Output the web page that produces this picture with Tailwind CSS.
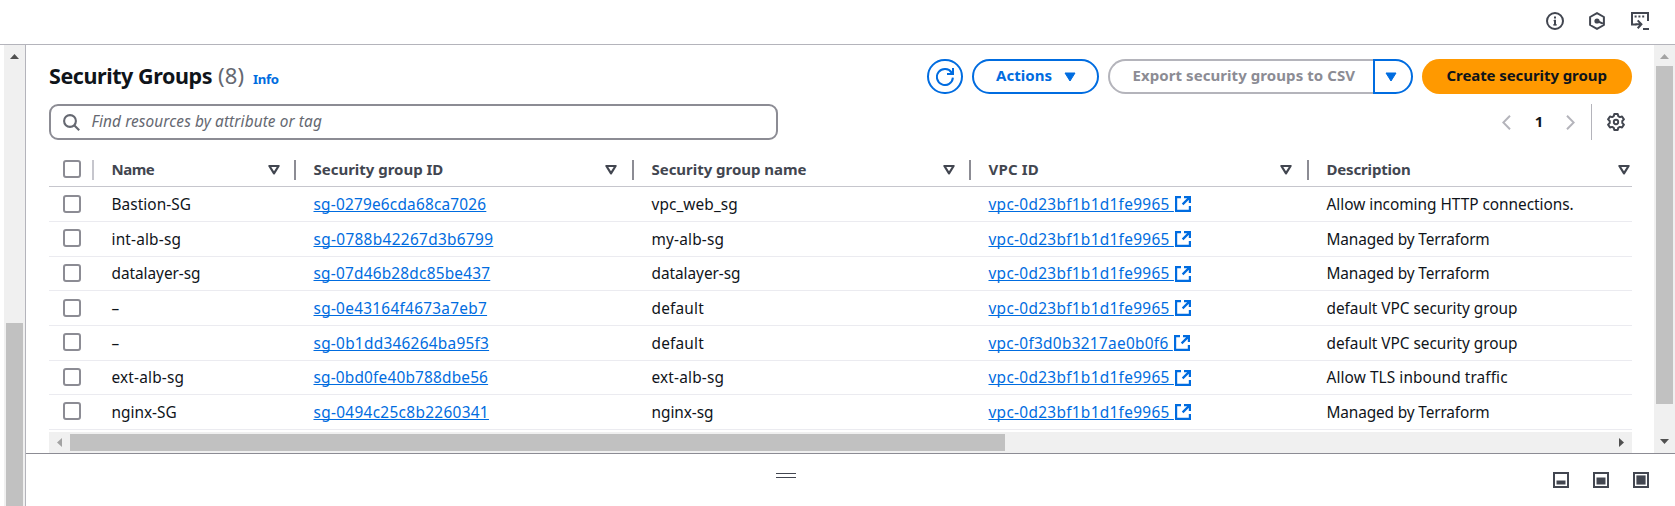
<!DOCTYPE html>
<html lang="en">
<head>
<meta charset="utf-8">
<title>Security Groups</title>
<script src="https://cdn.jsdelivr.net/npm/@tailwindcss/browser@4"></script>
</head>
<body class="w-[1675px] h-[506px] overflow-hidden bg-white font-['Noto_Sans','Open_Sans',sans-serif] text-[15.4px] text-[#0f141a] flex flex-col whitespace-nowrap">

<!-- Top bar -->
<header class="h-[45px] shrink-0 border-b border-[#b4b4bb] flex justify-end pt-3 pr-[26px] text-[#424650]">
  <svg class="w-[18px] h-[18px] mr-6" viewBox="0 0 18 18" fill="none" stroke="currentColor" stroke-width="2"><circle cx="9" cy="9" r="8"/><path d="M9 7.8V13.2M9 4.6V6.6"/><path d="M7.6 8.6H9M7.2 12.9H10.8" stroke-width="1.2"/></svg>
  <svg class="w-[18px] h-[18px] mr-[25px]" viewBox="0 0 18 18" fill="none" stroke="currentColor" stroke-width="2"><path d="M9 1.1L15.9 5V13L9 16.9L2.1 13V5Z" stroke-linejoin="round"/><circle cx="9" cy="9" r="2.6" fill="currentColor" stroke="none"/><path d="M9 9L15 11.6"/></svg>
  <svg class="w-[18px] h-[18px]" viewBox="0 0 18 18" fill="none" stroke="currentColor" stroke-width="2"><path d="M5.5 12.5H1V1H17V9"/><path d="M3.6 4.4H5.6M7.4 4.4H9.4M11.2 4.4H13.2"/><path d="M4.5 12.3H9.4M6.7 8.4L10.4 12.2L6.7 16.2M12 17H18"/></svg>
</header>

<div class="flex flex-1 min-h-0">
  <!-- Navigation scrollbar -->
  <div class="ml-1 w-[21px] bg-[#f0f0f0] flex flex-col items-center shrink-0">
    <svg class="w-[9px] h-[5px] mt-[9px] shrink-0" viewBox="0 0 9 5" fill="#505050"><path d="M4.5 0L9 5H0Z"/></svg>
    <div class="mt-[264px] w-[17px] flex-1 bg-[#c1c1c1]"></div>
  </div>

  <div class="flex-1 min-w-0 border-l border-[#b4b4bb] flex flex-col">
    <div class="h-[408px] flex shrink-0">
      <main class="w-[1606px] pl-[23px] flex flex-col">
        <!-- Title and actions -->
        <div class="h-[49px] pt-[14px] flex items-start">
          <h1 class="flex h-[35px] text-[21.5px] leading-[34px] font-bold tracking-[-0.43px] w-[169px]">Security Groups</h1>
          <span class="text-[22px] leading-[34px] -mt-[1px] text-[#656871] tracking-[0.2px] w-[35px]">(8)</span>
          <a class="text-[13.2px] leading-[34px] mt-[3px] font-bold text-[#006ce0] tracking-[-0.35px] flex-1">Info</a>
          <div class="flex h-[35px] leading-[28px] font-bold text-[15px]">
            <button class="w-9 h-[35px] border-2 border-[#006ce0] rounded-full text-[#006ce0] flex items-center justify-center mr-[9px]">
              <svg class="w-[18px] h-[18px]" viewBox="0 0 18 18" fill="none" stroke="currentColor" stroke-width="2"><path d="M16.9 9.6A8 8 0 1 1 15.6 4.6L17 6.2M17 0V6H11"/></svg>
            </button>
            <button class="w-[127px] border-2 border-[#006ce0] rounded-full text-[#006ce0] flex items-center pl-[22px] mr-[9px]"><span class="w-[68px] text-left tracking-[0.04px] -mt-[3px]">Actions</span><svg class="w-[12px] h-[10px]" viewBox="0 0 12 10" fill="currentColor" stroke="currentColor" stroke-linejoin="round"><path d="M1 1H11L6 9Z"/></svg></button>
            <button class="w-[265px] border-2 border-r-0 border-[#b4b4bb] rounded-l-full text-[#8c8c94] text-left pl-[22.5px] pb-[3px] tracking-[0.07px]">Export security groups to CSV</button>
            <button class="w-10 border-2 border-[#006ce0] rounded-r-full text-[#006ce0] flex items-center pl-[10px] mr-[9px]"><svg class="w-[12px] h-[10px]" viewBox="0 0 12 10" fill="currentColor" stroke="currentColor" stroke-linejoin="round"><path d="M1 1H11L6 9Z"/></svg></button>
            <button class="w-[210px] bg-[#ff9900] rounded-full text-left pl-[24.5px] pb-[3px] tracking-[-0.08px]">Create security group</button>
          </div>
        </div>

        <!-- Filter and pagination -->
        <div class="h-9 mt-[10px] flex">
          <div class="w-[729px] h-9 border-2 border-[#8c8c94] rounded-[9px] flex items-center text-[#656871]">
            <svg class="w-[17px] h-[17px] ml-3 mr-[11.5px]" viewBox="0 0 17 17" fill="none" stroke="currentColor" stroke-width="2.1"><circle cx="7" cy="7" r="5.9"/><path d="M11.2 11.2L16.2 16.2"/></svg>
            <span class="italic leading-[32px] text-[15.4px] tracking-[0.1px]">Find resources by attribute or tag</span>
          </div>
          <div class="flex-1"></div>
          <div class="flex items-center text-[#b4b4bb]">
            <svg class="w-[9px] h-[15px] mt-[1px]" viewBox="0 0 9 15" fill="none" stroke="currentColor" stroke-width="2"><path d="M8 0.8L1.3 7.5L8 14.2"/></svg>
            <span class="w-[55px] pl-px text-center font-bold text-[15px] leading-[34px] -mt-[2px] text-[#0f141a]">1</span>
            <svg class="w-[9px] h-[15px] mt-[1px]" viewBox="0 0 9 15" fill="none" stroke="currentColor" stroke-width="2"><path d="M1 0.8L7.7 7.5L1 14.2"/></svg>
          </div>
          <div class="w-px ml-4 bg-[#b4b4bb]"></div>
          <svg class="w-[18px] h-[18px] ml-[15px] mr-[7px] mt-[9px] text-[#424650]" viewBox="0 0 18 18" fill="none" stroke="currentColor" stroke-width="2" stroke-linejoin="round"><path d="M6.8 3.1L7.3 1H10.7L11.2 3.1L12.9 4.1L15 3.5L16.9 6.4L15.3 8V10L16.9 11.6L15 14.5L12.9 13.9L11.2 14.9L10.7 17H7.3L6.8 14.9L5.1 13.9L3 14.5L1.1 11.6L2.7 10V8L1.1 6.4L3 3.5L5.1 4.1Z"/><circle cx="9" cy="9" r="2.2" stroke-width="1.9"/></svg>
        </div>

        <!-- Table -->
        <div id="head" class="h-[47px] border-b border-[#c6c6cd] grid grid-cols-[45px_202px_338px_337px_338px_323px] pt-5 text-[15px] font-bold text-[#424650]"></div>
        <div id="rows"></div>

        <!-- Horizontal scrollbar -->
        <div class="mt-[2px] h-[21px] bg-[#f0f0f0] flex items-center">
          <svg class="w-[5px] h-[9px] ml-2 mr-2" viewBox="0 0 5 9" fill="#a3a3a3"><path d="M0 4.5L5 0V9Z"/></svg>
          <div class="w-[935px] h-[17px] bg-[#c1c1c1]"></div>
          <div class="flex-1"></div>
          <svg class="w-[5px] h-[9px] mr-2" viewBox="0 0 5 9" fill="#505050"><path d="M5 4.5L0 0V9Z"/></svg>
        </div>
      </main>
      <!-- Content scrollbar -->
      <div class="w-[21px] ml-[22px] bg-[#f0f0f0] flex flex-col items-center shrink-0">
        <svg class="w-[9px] h-[5px] mt-[9px]" viewBox="0 0 9 5" fill="#a3a3a3"><path d="M4.5 0L9 5H0Z"/></svg>
        <div class="mt-[7px] w-[17px] h-[338px] bg-[#c1c1c1]"></div>
        <svg class="w-[9px] h-[5px] mt-[35px]" viewBox="0 0 9 5" fill="#505050"><path d="M4.5 5L0 0H9Z"/></svg>
      </div>
    </div>

    <!-- Split panel -->
    <footer class="flex-1 border-t border-[#8c8c94] flex text-[#424650]">
      <div class="ml-[750px] mt-[19px] w-5 h-[5px] border-y border-[#424650]"></div>
      <div class="flex-1"></div>
      <div class="flex gap-6 mt-[18px] mr-[26px]">
        <svg class="w-4 h-4" viewBox="0 0 16 16" fill="currentColor"><path d="M1 1H15V15H1Z" fill="none" stroke="currentColor" stroke-width="2"/><path d="M3.5 8.5H12.5V12.5H3.5Z"/></svg>
        <svg class="w-4 h-4" viewBox="0 0 16 16" fill="currentColor"><path d="M1 1H15V15H1Z" fill="none" stroke="currentColor" stroke-width="2"/><path d="M3.5 5.5H12.5V12.5H3.5Z"/></svg>
        <svg class="w-4 h-4" viewBox="0 0 16 16" fill="currentColor"><path d="M1 1H15V15H1Z" fill="none" stroke="currentColor" stroke-width="2"/><path d="M3.4 3.4H12.6V12.6H3.4Z"/></svg>
      </div>
    </footer>
  </div>
</div>

<script>
const box = '<span class="block ml-[14px] w-[18px] h-[18px] border-2 border-[#8c8c94] rounded-[3px] bg-white"></span>';
const sort = '<svg class="w-3 h-[10px] mt-[5px]" viewBox="0 0 12 10" fill="none" stroke="currentColor" stroke-width="2.2" stroke-linejoin="round"><path d="M1.4 1H10.6L6 8.4Z"/></svg>';
const ext = '<svg class="w-4 h-4 mt-[9px] ml-[1.5px]" viewBox="0 0 16 16" fill="none" stroke="currentColor" stroke-width="2.2"><path d="M6 1.1H1.1V14.9H14.9V10M9 1.1H14.9V7M14.6 1.4L7.6 8.4"/></svg>';

const columns = [
  ['Name', 'tracking-[-0.49px]', 'mr-[14px]', 'border-r-2 border-[#8c8c94]'],
  ['Security group ID', 'tracking-[-0.02px]', 'mr-[15px]', 'border-r-2 border-[#8c8c94]'],
  ['Security group name', 'tracking-[-0.03px]', 'mr-[14px]', 'border-r-2 border-[#8c8c94]'],
  ['VPC ID', 'tracking-[0.18px]', 'mr-[15px]', 'border-r-2 border-[#8c8c94]'],
  ['Description', 'tracking-[-0.17px]', 'mr-[2px]', ''],
];
document.getElementById('head').innerHTML =
  '<div class="h-5 border-r-2 border-[#c6c6cd]">' + box + '</div>' +
  columns.map(([t, tr, mr, b]) => `<div class="h-5 flex justify-between pl-[17.5px] ${b}"><span class="leading-5 -mt-[1px] ${tr}">${t}</span><span class="${mr}">${sort}</span></div>`).join('');

const vpc = ['vpc-0d23bf1b1d1fe9965', 'tracking-[0.3px]'];
const tf = ['Managed by Terraform', 'tracking-[-0.14px]'];
const dv = ['default VPC security group', 'tracking-[-0.04px]'];
const tall = ['h-[35px]', 'leading-[36px]', 'pt-2'];
const tall7 = ['h-[35px]', 'leading-[36px]', 'pt-[7px]'];
const short = ['h-[34px]', 'leading-[34px]', 'pt-[7px]'];
const rows = [
  [tall, ['Bastion-SG', 'tracking-[0.05px]'], ['sg-0279e6cda68ca7026', 'tracking-[0.2px]'], ['vpc_web_sg', 'tracking-[0.09px]'], vpc, ['Allow incoming HTTP connections.', 'tracking-[-0.03px]']],
  [tall7, ['int-alb-sg', 'tracking-[0.17px]'], ['sg-0788b42267d3b6799', 'tracking-[0.32px]'], ['my-alb-sg', 'tracking-[0.17px]'], vpc, tf],
  [short, ['datalayer-sg', 'tracking-[-0.05px]'], ['sg-07d46b28dc85be437', 'tracking-[0.21px]'], ['datalayer-sg', 'tracking-[-0.05px]'], vpc, tf],
  [tall, ['–', ''], ['sg-0e43164f4673a7eb7', 'tracking-[0.27px]'], ['default', 'tracking-[0.2px]'], vpc, dv],
  [tall7, ['–', ''], ['sg-0b1dd346264ba95f3', 'tracking-[0.26px]'], ['default', 'tracking-[0.2px]'], ['vpc-0f3d0b3217ae0b0f6', 'tracking-[0.29px]'], dv],
  [short, ['ext-alb-sg', 'tracking-[0.17px]'], ['sg-0bd0fe40b788dbe56', 'tracking-[0.18px]'], ['ext-alb-sg', 'tracking-[0.17px]'], vpc, ['Allow TLS inbound traffic', 'tracking-[0.09px]']],
  [tall7, ['nginx-SG', 'tracking-[0px]'], ['sg-0494c25c8b2260341', 'tracking-[0.31px]'], ['nginx-sg', 'tracking-[-0.05px]'], vpc, tf],
];
const link = 'text-[#006ce0] underline [text-decoration-thickness:1px] [text-underline-offset:1px] [text-decoration-skip-ink:none]';
document.getElementById('rows').innerHTML = rows.map(([[h, lh, pt], name, id, group, v, desc]) => `
  <div class="${h} ${lh} border-b border-[#ebebf0] grid grid-rows-[33px] grid-cols-[45px_202px_338px_337px_338px_323px]">
    <div class="${pt}">${box}</div>
    <div class="pl-[17.5px] ${name[1]}">${name[0]}</div>
    <div class="pl-[17.5px]"><a class="${link} ${id[1]}">${id[0]}</a></div>
    <div class="pl-[17.5px] ${group[1]}">${group[0]}</div>
    <div class="pl-[17.5px] flex items-start text-[#006ce0]"><a class="${link} whitespace-pre ${v[1]}">${v[0]} </a>${ext}</div>
    <div class="pl-[17.5px] ${desc[1]}">${desc[0]}</div>
  </div>`).join('');
</script>
</body>
</html>
